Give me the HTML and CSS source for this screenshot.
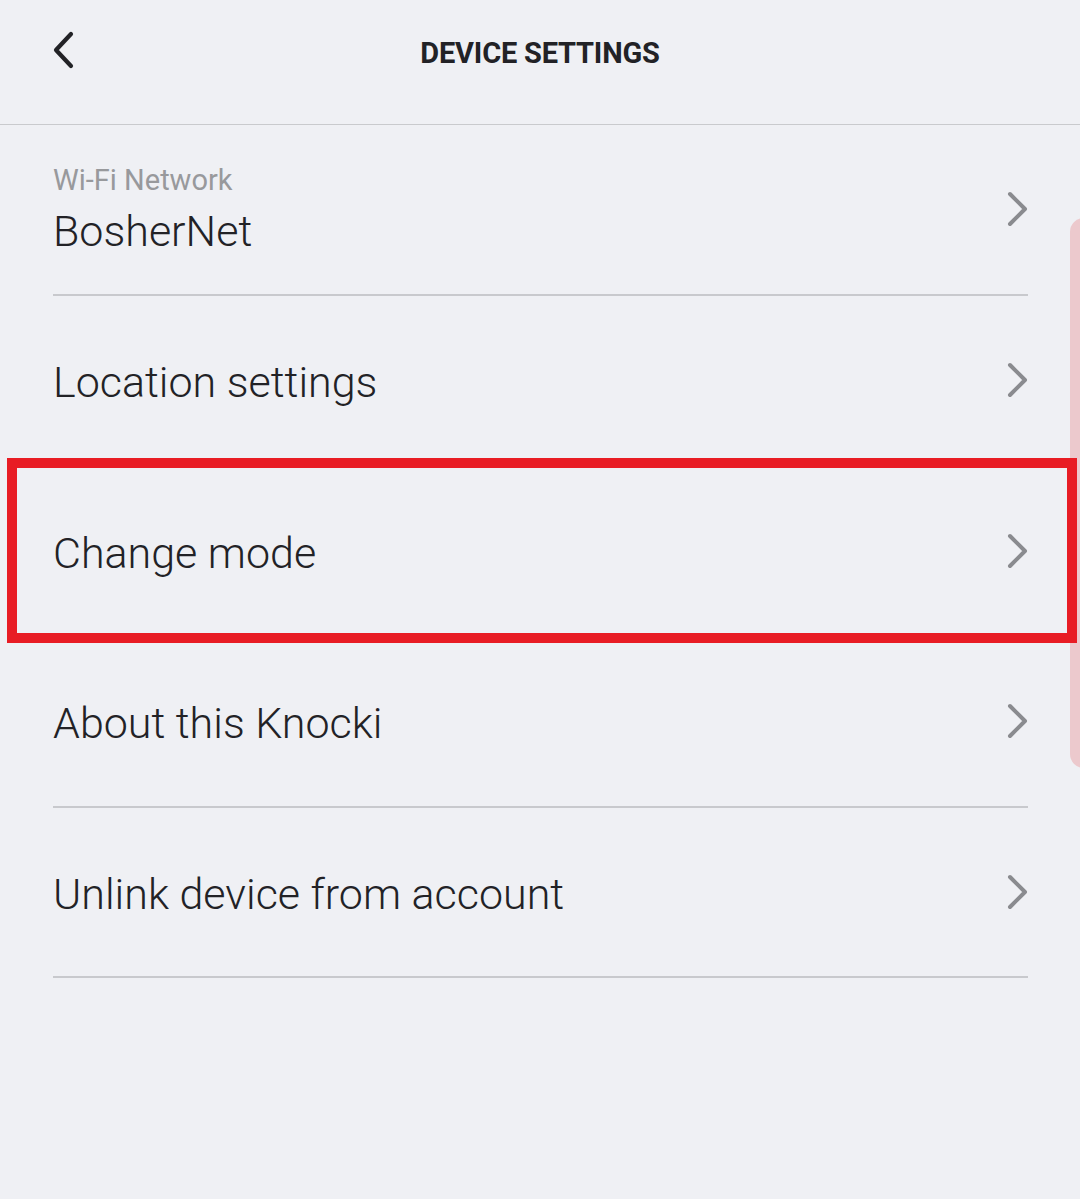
FILE: index.html
```html
<!DOCTYPE html>
<html>
<head>
<meta charset="utf-8">
<link rel="stylesheet" href="styles.css">
</head>
<body>
<div class="screen">
  <header class="topbar">
    <svg class="back" width="30" height="40" viewBox="0 0 30 40"><polyline points="22,3 7,19 22,35" fill="none" stroke="#222226" stroke-width="4.2" stroke-linecap="round" stroke-linejoin="round"/></svg>
    <h1 class="title">DEVICE SETTINGS</h1>
  </header>
  <ul class="list">
    <li class="row divided">
      <div class="text">
        <div class="label">Wi-Fi Network</div>
        <div class="value">BosherNet</div>
      </div>
      <svg class="chev" width="26" height="40" viewBox="0 0 26 40"><polyline points="5,5 20,20 5,35" fill="none" stroke="#8a8b8f" stroke-width="4" stroke-linecap="round" stroke-linejoin="round"/></svg>
    </li>
    <li class="row">
      <div class="text"><div class="main">Location settings</div></div>
      <svg class="chev" width="26" height="40" viewBox="0 0 26 40"><polyline points="5,5 20,20 5,35" fill="none" stroke="#8a8b8f" stroke-width="4" stroke-linecap="round" stroke-linejoin="round"/></svg>
    </li>
    <li class="row highlighted">
      <div class="text"><div class="main">Change mode</div></div>
      <svg class="chev" width="26" height="40" viewBox="0 0 26 40"><polyline points="5,5 20,20 5,35" fill="none" stroke="#8a8b8f" stroke-width="4" stroke-linecap="round" stroke-linejoin="round"/></svg>
    </li>
    <li class="row divided">
      <div class="text"><div class="main">About this Knocki</div></div>
      <svg class="chev" width="26" height="40" viewBox="0 0 26 40"><polyline points="5,5 20,20 5,35" fill="none" stroke="#8a8b8f" stroke-width="4" stroke-linecap="round" stroke-linejoin="round"/></svg>
    </li>
    <li class="row divided">
      <div class="text"><div class="main">Unlink device from account</div></div>
      <svg class="chev" width="26" height="40" viewBox="0 0 26 40"><polyline points="5,5 20,20 5,35" fill="none" stroke="#8a8b8f" stroke-width="4" stroke-linecap="round" stroke-linejoin="round"/></svg>
    </li>
  </ul>
  <div class="scrollbar"></div>
</div>
</body>
</html>
```
FILE: styles.css
```css
html, body {
  margin: 0;
  padding: 0;
  background: #eff0f4;
}
.screen {
  position: relative;
  width: 1080px;
  height: 1199px;
  overflow: hidden;
  background: #eff0f4;
  font-family: Roboto, "Liberation Sans", sans-serif;
}
.topbar {
  height: 124px;
  border-bottom: 1px solid #c9cacd;
  display: flex;
  align-items: center;
  justify-content: center;
  position: relative;
}
.back {
  position: absolute;
  left: 49px;
  top: 31px;
}
.title {
  margin: 0;
  margin-top: -18px;
  font-size: 29px;
  font-weight: 700;
  color: #222226;
  letter-spacing: -0.2px;
}
.list {
  list-style: none;
  margin: 0;
  padding: 0 52px 0 53px;
}
.row {
  height: 168.67px;
  border-bottom: 2px solid transparent;
  display: flex;
  align-items: center;
  justify-content: space-between;
  position: relative;
}
.row.divided {
  border-bottom-color: #c8c9cd;
}
.row .text {
  display: flex;
  flex-direction: column;
  padding-top: 4px;
}
.label {
  font-size: 29px;
  color: #98999c;
  line-height: 34px;
  margin-top: 0;
}
.value {
  font-size: 43px;
  font-weight: 300;
  color: #222226;
  line-height: 56px;
  margin-top: 6px;
}
.main {
  font-size: 43px;
  font-weight: 300;
  color: #222226;
  line-height: 56px;
}
.chev {
  margin-right: -3px;
}
.highlighted::before {
  content: "";
  position: absolute;
  left: -46px;
  right: -49px;
  top: -8px;
  bottom: -8px;
  border: 10px solid #e81c24;
  pointer-events: none;
  z-index: 2;
}
.scrollbar {
  position: absolute;
  left: 1070px;
  top: 218px;
  width: 30px;
  height: 550px;
  border-radius: 14px;
  background: #ecc9cd;
  z-index: 1;
}
```
